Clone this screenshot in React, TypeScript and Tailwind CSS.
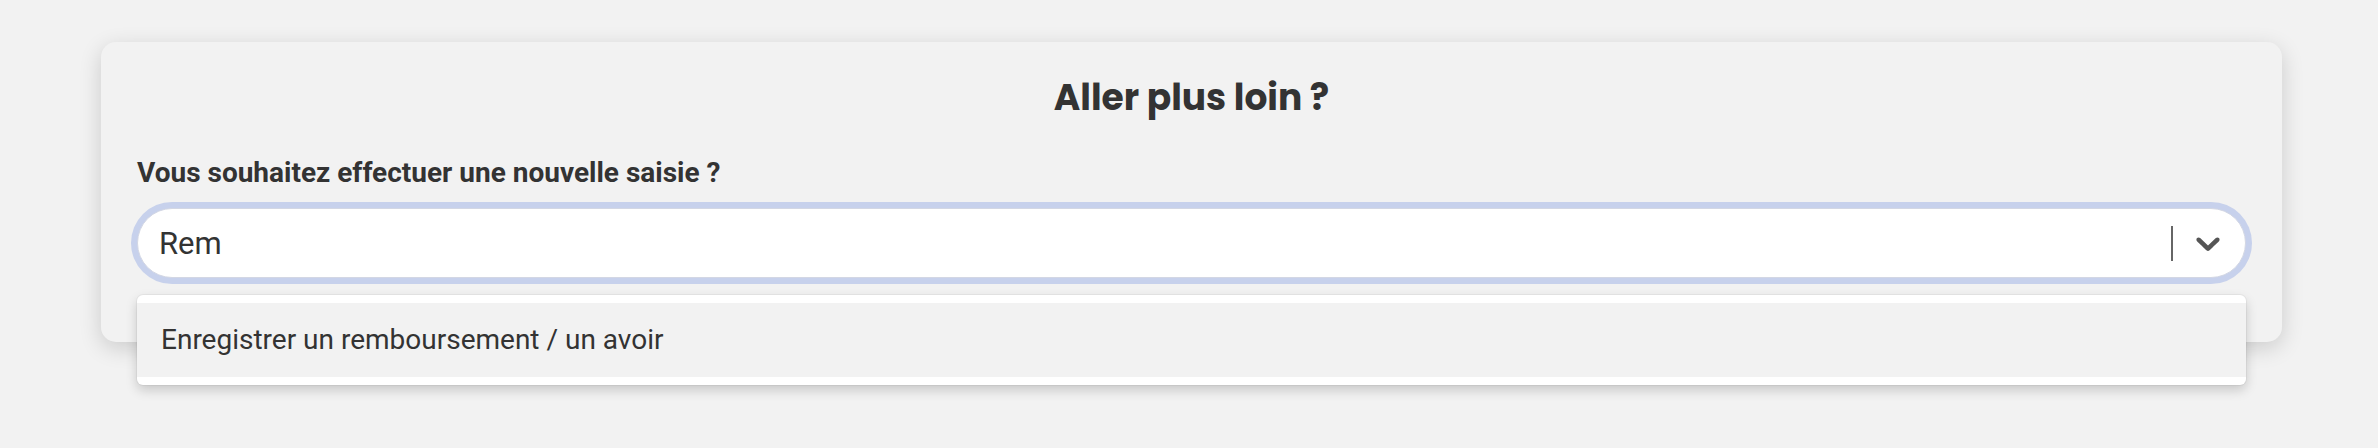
import { useState } from "react"

const options = ["Enregistrer un remboursement / un avoir"]

function ChevronDown() {
  return (
    <svg viewBox="0 0 20 20" className="h-[40px] w-[40px] fill-[#555555]" aria-hidden="true">
      <path d="M4.516 7.548c0.436-0.446 1.043-0.481 1.576 0l3.908 3.747 3.908-3.747c0.533-0.481 1.141-0.446 1.574 0 0.436 0.445 0.408 1.197 0 1.615-0.406 0.418-4.695 4.502-4.695 4.502-0.217 0.223-0.502 0.335-0.787 0.335s-0.57-0.112-0.789-0.335c0 0-4.287-4.084-4.695-4.502s-0.436-1.17 0-1.615z" />
    </svg>
  )
}

export default function App() {
  const [query, setQuery] = useState<string>("Rem")

  return (
    <div className="h-[448px] w-full bg-[#f2f2f2] pt-[42px] font-['Roboto',sans-serif] text-[#333333]">
      <div className="ml-[101px] w-[2181px] rounded-[15px] bg-[#f2f2f2] px-[36px] pt-[34px] pb-[64px] shadow-[0_6px_22px_rgba(0,0,0,0.16)]">
        <h2 className="text-center font-['Poppins','Inter',sans-serif] text-[36px] leading-[44px] font-bold">
          Aller plus loin ?
        </h2>

        <p className="mt-[35px] text-[28px] leading-[36px] font-bold">
          Vous souhaitez effectuer une nouvelle saisie ?
        </p>

        <div className="relative mt-[17px]">
          <div className="flex h-[70px] items-center rounded-full border border-[#d3d7e4] bg-white shadow-[0_0_0_6px_#c7d1ec]">
            <input
              value={query}
              onChange={(e) => setQuery(e.target.value)}
              className="h-full min-w-0 flex-1 bg-transparent pl-[21px] text-[31px] text-[#333333] outline-none"
            />
            <span className="h-[35px] w-[2px] bg-[#666666]" />
            <span className="ml-[15px] mr-[17px] flex items-center">
              <ChevronDown />
            </span>
          </div>

          <div className="absolute top-full right-0 left-0 mt-[17px] rounded-[6px] bg-white py-[8px] shadow-[0_5px_12px_rgba(0,0,0,0.18),0_0_0_1px_rgba(0,0,0,0.04)]">
            {options.map((option) => (
              <div key={option} className="flex h-[74px] items-center bg-[#f2f2f2] pl-[24px] text-[28px]">
                {option}
              </div>
            ))}
          </div>
        </div>
      </div>
    </div>
  )
}
